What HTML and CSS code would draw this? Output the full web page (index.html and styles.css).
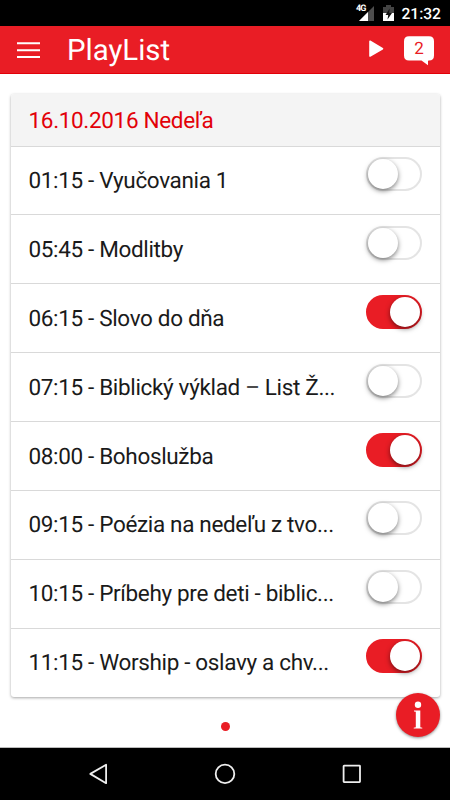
FILE: index.html
```html
<!DOCTYPE html>
<html lang="sk">
<head>
<meta charset="utf-8">
<title>PlayList</title>
<link rel="stylesheet" href="styles.css">
</head>
<body>
<div class="screen">
  <div class="status">
    <svg class="status-icons" width="40" height="18" viewBox="0 0 40 18">
      <path d="M20 2v15H5z" fill="#4d4d4d"/>
      <path d="M14 8v9H5z" fill="#fff"/>
      <path d="M29 3h3V1h5v2h3v6H29z" fill="#444"/>
      <path d="M29 9h11v8H29z" fill="#fff"/>
      <path d="M35.700 4.500 31.500 11h2.700l-.7 4.500L38 9h-2.800z" fill="#111"/>
    </svg>
    <span class="network">4G</span>
    <span class="clock">21:32</span>
  </div>
  <header class="appbar">
    <svg class="menu" width="24" height="18" viewBox="0 0 24 18"><path d="M0 2.300h23M0 9.300h23M0 15.900h23" stroke="#fff" stroke-width="2"/></svg>
    <h1>PlayList</h1>
    <svg class="play" width="17" height="20" viewBox="0 0 17 20"><path d="M2 1.300 14.500 8.700 2 16z" fill="#fff" stroke="#fff" stroke-width="1.600" stroke-linejoin="round"/></svg>
    <div class="messages">
      <svg width="30" height="30" viewBox="0 0 30 30"><path d="M5 .2h20q5 0 5 5v14.300q0 5-5 5l-1 .2v4.500L17.500 24.500H5q-5 0-5-5V5.200q0-5 5-5z" fill="#fff"/></svg>
      <span>2</span>
    </div>
  </header>
  <main>
    <section class="card">
      <h2>16.10.2016 Nedeľa</h2>
      <div class="row"><span class="name">01:15 - Vyučovania 1</span><span class="toggle"></span></div>
      <div class="row"><span class="name">05:45 - Modlitby</span><span class="toggle"></span></div>
      <div class="row"><span class="name">06:15 - Slovo do dňa</span><span class="toggle on"></span></div>
      <div class="row"><span class="name">07:15 - Biblický výklad – List Ž...</span><span class="toggle"></span></div>
      <div class="row"><span class="name">08:00 - Bohoslužba</span><span class="toggle on"></span></div>
      <div class="row"><span class="name">09:15 - Poézia na nedeľu z tvo...</span><span class="toggle"></span></div>
      <div class="row"><span class="name">10:15 - Príbehy pre deti - biblic...</span><span class="toggle"></span></div>
      <div class="row"><span class="name">11:15 - Worship - oslavy a chv...</span><span class="toggle on"></span></div>
    </section>
    <div class="pager"></div>
    <div class="info"><svg width="44" height="44" viewBox="0 0 44 44"><circle cx="22" cy="11.800" r="3.200" fill="#fff"/><path d="M18 17.500h6.300v16.800l2 .4v.9h-8.600v-.9l2.100-.4V18.800l-1.800-.4z" fill="#fff"/></svg></div>
  </main>
  <nav class="navbar">
    <svg width="20" height="22" viewBox="0 0 20 22"><path d="M18.100 1.700v18.500L2.300 10.900z"/></svg>
    <svg width="22" height="22" viewBox="0 0 22 22"><circle cx="11" cy="10.900" r="9.300"/></svg>
    <svg width="20" height="22" viewBox="0 0 20 22"><rect x="1.600" y="2.700" width="16.400" height="16.400" rx=".5"/></svg>
  </nav>
</div>
</body>
</html>
```
FILE: styles.css
```css
* { box-sizing: border-box; }
body { margin: 0; background: #fff; font-family: Roboto, sans-serif; text-rendering: geometricPrecision; }
.screen { width: 450px; height: 800px; display: flex; flex-direction: column; overflow: hidden; }
.status { position: relative; height: 26px; background: #000; color: #fff; display: flex; align-items: flex-start; padding: 4px 9px 0 0; justify-content: flex-end; }
.status-icons { margin-right: 7px; }
.network { position: absolute; left: 356px; top: 4px; font-size: 9px; line-height: 10px; font-weight: 700; letter-spacing: -.8px; }
.clock { font-size: 15.600px; line-height: 20px; font-weight: 500; }
.appbar { height: 48px; background: #e91d25; border-bottom: 1px solid #e20008; color: #fff; display: flex; align-items: center; padding: 0 16px 0 17px; }
.menu { margin: 0 26px 0 0; }
h1 { margin: 0; padding-top: 2px; flex: 1; font-size: 29.400px; line-height: 44px; font-weight: 400; }
.play { margin-right: 19px; }
.messages { position: relative; width: 30px; height: 30px; margin-top: 2px; }
.messages svg { display: block; }
.messages span { position: absolute; left: 0; top: 1px; width: 30px; line-height: 25px; text-align: center; font-size: 17px; color: #e91d25; }
main { position: relative; height: 674px; padding: 20px 10px 0 11px; border-bottom: 1px solid #bbb; }
.card { height: 603px; background: #fff; border-radius: 3px; box-shadow: 0 1px 3px rgba(0,0,0,.35); }
h2 { margin: 0; height: 51.600px; padding-left: 17.500px; border-radius: 3px 3px 0 0; background: #f4f4f4; color: #e20008; font-size: 22.500px; letter-spacing: -.33px; line-height: 54px; font-weight: 400; }
.row { height: 68.870px; border-top: 1px solid #d9d9d9; display: flex; justify-content: space-between; align-items: flex-start; padding: 10.600px 18px 0 17.500px; color: #1a1a1a; }
.name { font-size: 22.500px; line-height: 48px; letter-spacing: -.34px; white-space: nowrap; }
.toggle { display: flex; width: 56px; height: 34px; border: 2px solid #e4e4e4; border-radius: 17px; background: #fff; }
.toggle::before { content: ""; width: 30px; height: 30px; border-radius: 50%; background: #fff; box-shadow: 0 2px 5px rgba(0,0,0,.5); }
.toggle.on { justify-content: flex-end; border-color: #e91d25; background: #e91d25; }
.pager { width: 9px; height: 9px; margin: 25px auto 0; border-radius: 50%; background: #e91d25; }
.info { position: absolute; left: 396px; top: 619px; width: 44px; height: 44px; border-radius: 50%; background: #e91d25; box-shadow: 0 1px 3px rgba(0,0,0,.45); }
.info svg { display: block; }
.navbar { height: 52px; background: #000; display: flex; justify-content: space-between; align-items: center; padding: 0 88px; }
.navbar svg { fill: none; stroke: #eee; stroke-width: 1.800; stroke-linejoin: round; }
```
